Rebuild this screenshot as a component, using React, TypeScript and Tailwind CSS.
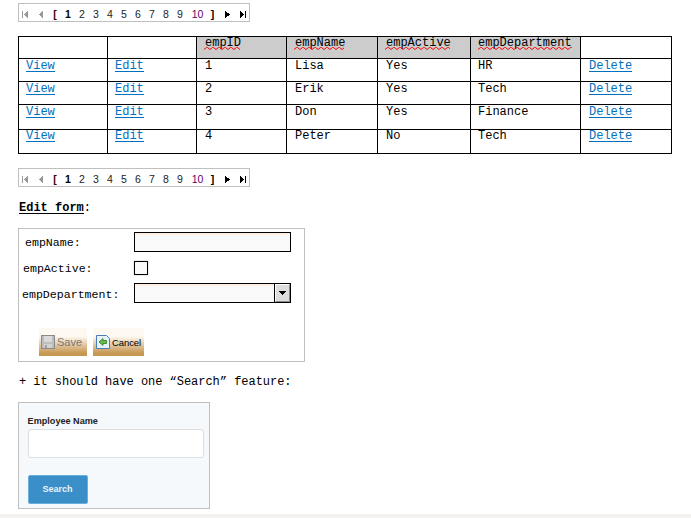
import React from "react";

function Pager() {
  return (
    <div className="flex h-[19px] w-[232px] items-center border border-[#bfbfbf] pl-[3px] font-['Liberation_Sans',sans-serif] text-[10.5px] leading-[17px] text-black">
      <svg width="6" height="7" className="mt-[3px] shrink-0" shapeRendering="crispEdges">
        <path d="M0 0h1v7h-1z M6 0v7l-4-3.5z" fill="#999" />
      </svg>
      <svg width="4" height="7" className="mt-[3px] ml-[11px] shrink-0" shapeRendering="crispEdges">
        <path d="M4 0v7l-4-3.5z" fill="#999" />
      </svg>
      <span className="ml-[6px] flex h-[17px] w-[14px] justify-center pr-[2px] pt-[2px] font-bold text-[#400]">[</span>
      <span className="flex h-[17px] w-[14px] justify-center pr-[4px] pt-[2px] font-bold">1</span>
      {[2, 3, 4, 5, 6, 7, 8, 9].map((n) => (
        <span key={n} className="flex h-[17px] w-[14px] justify-center pr-[4px] pt-[2px] text-[#222]">{n}</span>
      ))}
      <span className="flex h-[17px] w-[18px] justify-center pr-px pt-[2px] text-[#606]">10</span>
      <span className="flex h-[17px] w-[12px] justify-center pr-px pt-[2px] font-bold">]</span>
      <svg width="5" height="7" className="mt-[3px] ml-[6px] shrink-0" shapeRendering="crispEdges">
        <path d="M0 0v7l5-3.5z" />
      </svg>
      <svg width="6" height="7" className="mt-[3px] ml-[10px] shrink-0" shapeRendering="crispEdges">
        <path d="M0 0v7l4-3.5z M5 0h1v7h-1z" />
      </svg>
    </div>
  );
}

function Heading({ text, tight }: { text: string; tight?: boolean }) {
  const steps = Math.ceil((text.length * 7.2) / 6);
  const d = "M0 2.5" + Array.from({ length: steps }, () => "l2.500 -2h1l2.500 2").join("");
  return (
    <div className={"relative bg-[#ccc] leading-[14px] " + (tight ? "pl-[7px]" : "pl-2")}>
      <span className="block h-[13px] -mt-px">{text}</span>
      <svg className="absolute left-[7px] top-[10px]" width={text.length * 7.2} height="3">
        <path d={d} fill="none" stroke="#f00" />
      </svg>
    </div>
  );
}

function Cell({ text, link, last, tight }: { text: string; link?: boolean; last?: boolean; tight?: boolean }) {
  return (
    <div className={"bg-white leading-[14px] " + (tight ? "pl-[7px]" : "pl-2")}>
      <span
        className={
          (link ? "block w-fit h-[13px] border-b border-[#0070c0] text-[#0070c0] " : "block h-[13px] ") +
          (last ? "-mt-px" : "")
        }
      >
        {text}
      </span>
    </div>
  );
}

const employees = [
  ["1", "Lisa", "Yes", "HR"],
  ["2", "Erik", "Yes", "Tech"],
  ["3", "Don", "Yes", "Finance"],
  ["4", "Peter", "No", "Tech"],
];

function Table() {
  return (
    <div className="mt-[14px] grid w-[654px] grid-cols-[88px_88px_89px_90px_92px_109px_90px] grid-rows-[21px_22px_22px_24px_23px] gap-px border border-black bg-black">
      <div className="bg-white" />
      <div className="bg-white" />
      <Heading text="empID" />
      <Heading text="empName" />
      <Heading text="empActive" />
      <Heading text="empDepartment" tight />
      <div className="bg-white" />
      {employees.map((row, i) => (
        <React.Fragment key={row[0]}>
          <Cell text="View" link tight last={i === 3} />
          <Cell text="Edit" link tight last={i === 3} />
          {row.map((v, j) => (
            <Cell key={j} text={v} tight={j === 3} last={i === 3} />
          ))}
          <Cell text="Delete" link last={i === 3} />
        </React.Fragment>
      ))}
    </div>
  );
}

function EditForm() {
  return (
    <div className="mt-[14px] h-[134px] w-[287px] border border-[#bfbfbf] text-[11.6px] leading-[14px]">
      <div className="flex h-[24px] pt-[3px]">
        <span className="w-[115px] pl-[6px] pt-[4px]">empName:</span>
        <div className="h-[20px] w-[157px] border border-black bg-[#f9f9f9] bg-linear-to-b from-[#ffe9d6] to-[#f9f9f9] to-[3px]" />
      </div>
      <div className="flex h-[30px] pt-[8px]">
        <span className="w-[115px] pl-[4px] pt-px">empActive:</span>
        <div className="h-[14px] w-[14px] border border-black bg-[#f9f9f9] outline outline-[#eee]" />
      </div>
      <div className="flex h-[45px]">
        <span className="w-[115px] pl-[3px] pt-[5px]">empDepartment:</span>
        <div className="flex h-[20px] w-[157px] border border-black bg-[#f9f9f9] bg-linear-to-b from-[#ffe9d6] to-[#f9f9f9] to-[3px]">
          <div className="ml-auto h-[18px] w-[16px] border-l border-black bg-[#ddd]">
            <div className="flex h-full w-full items-center justify-center border border-t-white border-l-white border-r-[#888] border-b-[#888]">
              <svg width="7" height="4" shapeRendering="crispEdges">
                <path d="M0 0h7v1h-1v1h-1v1h-1v1h-1v-1h-1v-1h-1v-1h-1z" />
              </svg>
            </div>
          </div>
        </div>
      </div>
      <div className="flex gap-[6px] pl-[20px] font-['Liberation_Sans',sans-serif]">
        <div className="flex h-[28px] w-[48px] items-center bg-linear-to-b from-[#fdf9f0] from-30% to-[#c69750] to-90% pl-[2px] text-[11px] text-[#777]">
          <svg width="14" height="14" className="mr-[2px] shrink-0">
            <rect x=".5" y=".5" width="13" height="13" fill="#bdbdbd" stroke="#8a8a8a" />
            <rect x="3" y="1" width="8" height="6" fill="#dadada" />
            <rect x="3" y="9" width="8" height="4" fill="#d2d2d2" />
            <rect x="4" y="10" width="2" height="3" fill="#a0a0a0" />
          </svg>
          Save
        </div>
        <div className="flex h-[28px] w-[51px] items-center bg-linear-to-b from-[#fdf9f0] from-30% to-[#c69750] to-90% pl-[3px] pt-px text-[9.5px] tracking-[-0.1px] text-black">
          <svg width="14" height="14" className="mr-[2px] -mt-px shrink-0">
            <path d="M.5 .5h10l3 3v10h-13z" fill="#e8f2fd" stroke="#4a7ebb" />
            <path d="M3 7l4-3.500v2h3.500v3h-3.500v2z" fill="#6abb45" stroke="#2c7f22" strokeWidth=".8" />
          </svg>
          Cancel
        </div>
      </div>
    </div>
  );
}

function SearchPanel() {
  return (
    <div className="mt-[14px] h-[107px] w-[192px] border border-[#bfbfbf] bg-[#f5f9fc] pt-[12px] pl-[8.6px] font-['Liberation_Sans',sans-serif]">
      <div className="text-[9.1px] font-bold leading-[12px] text-[#222]">Employee Name</div>
      <div className="mt-[2px] h-[29px] w-[176px] rounded-[3px] border border-[#dcdfe2] bg-white" />
      <div className="mt-[17px] flex h-[29px] w-[60px] items-center justify-center rounded-[2px] border border-[#6aaedc] bg-[#3b8fc8] text-[9px] font-bold text-[#e8f4fc]">
        Search
      </div>
    </div>
  );
}

export default function App() {
  return (
    <div className="flex h-[518px] w-[691px] flex-col overflow-hidden bg-white font-['Liberation_Mono',monospace] text-[12px] text-black">
      <div className="h-[514px] pl-[18px] pt-[3px]">
        <Pager />
        <Table />
        <div className="mt-[14px]">
          <Pager />
        </div>
        <div className="mt-[13px] flex h-[14px] pl-px leading-[16px]">
          <span className="h-[14px] border-b border-black font-bold">Edit form</span>:
        </div>
        <EditForm />
        <div className="mt-[13px] h-[13px] pl-px tracking-[-0.03px] leading-[14px]">+ it should have one “Search” feature:</div>
        <SearchPanel />
      </div>
      <div className="h-1 bg-[#f2f1f0]" />
    </div>
  );
}
